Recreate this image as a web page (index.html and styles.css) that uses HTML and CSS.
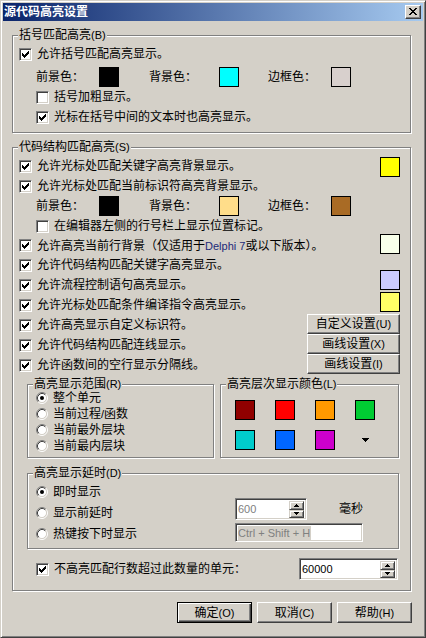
FILE: index.html
```html
<!DOCTYPE html>
<html lang="zh-CN">
<head>
<meta charset="utf-8">
<title>源代码高亮设置</title>
<link rel="stylesheet" href="styles.css">
</head>
<body>
<div class="window">
  <div class="titlebar">
    <span class="title">源代码高亮设置</span>
    <span class="close"><svg class="xglyph" width="8" height="7" viewBox="0 0 8 7"><path d="M0 0h2v1H0zM6 0h2v1H6zM1 1h2v1H1zM5 1h2v1H5zM2 2h4v1H2zM3 3h2v1H3zM2 4h4v1H2zM1 5h2v1H1zM5 5h2v1H5zM0 6h2v1H0zM6 6h2v1H6z" fill="#000"/></svg></span>
  </div>
  <div class="client">
    <div class="group g1">
      <span class="legend">括号匹配高亮<span class="m">(B)</span></span>
      <div class="row"><span class="cb"><svg class="ck" width="11" height="11" viewBox="0 0 11 11"><path d="M2 4h1v3H2zM3 5h1v3H3zM4 6h1v3H4zM5 5h1v3H5zM6 4h1v3H6zM7 3h1v3H7zM8 2h1v3H8z"/></svg></span><span class="txt">允许括号匹配高亮显示。</span></div>
      <div class="colors">
        <span class="lbl l1">前景色：</span><span class="sw c-black"></span>
        <span class="lbl l2">背景色：</span><span class="sw c-cyan"></span>
        <span class="lbl l3">边框色：</span><span class="sw c-pale"></span>
      </div>
      <div class="row ind"><span class="cb"></span><span class="txt">括号加粗显示。</span></div>
      <div class="row ind"><span class="cb"><svg class="ck" width="11" height="11" viewBox="0 0 11 11"><path d="M2 4h1v3H2zM3 5h1v3H3zM4 6h1v3H4zM5 5h1v3H5zM6 4h1v3H6zM7 3h1v3H7zM8 2h1v3H8z"/></svg></span><span class="txt">光标在括号中间的文本时也高亮显示。</span></div>
    </div>

    <div class="group g2">
      <span class="legend">代码结构匹配高亮<span class="m">(S)</span></span>
      <div class="g2top">
        <div class="rows">
          <div class="row"><span class="cb"><svg class="ck" width="11" height="11" viewBox="0 0 11 11"><path d="M2 4h1v3H2zM3 5h1v3H3zM4 6h1v3H4zM5 5h1v3H5zM6 4h1v3H6zM7 3h1v3H7zM8 2h1v3H8z"/></svg></span><span class="txt">允许光标处匹配关键字高亮背景显示。</span></div>
          <div class="row"><span class="cb"><svg class="ck" width="11" height="11" viewBox="0 0 11 11"><path d="M2 4h1v3H2zM3 5h1v3H3zM4 6h1v3H4zM5 5h1v3H5zM6 4h1v3H6zM7 3h1v3H7zM8 2h1v3H8z"/></svg></span><span class="txt">允许光标处匹配当前标识符高亮背景显示。</span></div>
          <div class="colors c2">
            <span class="lbl l1">前景色：</span><span class="sw c-black"></span>
            <span class="lbl l2">背景色：</span><span class="sw c-peach"></span>
            <span class="lbl l3">边框色：</span><span class="sw c-brown"></span>
          </div>
          <div class="row ind"><span class="cb"></span><span class="txt">在编辑器左侧的行号栏上显示位置标记。</span></div>
          <div class="row r19"><span class="cb"><svg class="ck" width="11" height="11" viewBox="0 0 11 11"><path d="M2 4h1v3H2zM3 5h1v3H3zM4 6h1v3H4zM5 5h1v3H5zM6 4h1v3H6zM7 3h1v3H7zM8 2h1v3H8z"/></svg></span><span class="txt">允许高亮当前行背景（仅适用于<span class="m delphi">Delphi 7</span>或以下版本）。</span></div>
          <div class="row"><span class="cb"><svg class="ck" width="11" height="11" viewBox="0 0 11 11"><path d="M2 4h1v3H2zM3 5h1v3H3zM4 6h1v3H4zM5 5h1v3H5zM6 4h1v3H6zM7 3h1v3H7zM8 2h1v3H8z"/></svg></span><span class="txt">允许代码结构匹配关键字高亮显示。</span></div>
          <div class="row"><span class="cb"><svg class="ck" width="11" height="11" viewBox="0 0 11 11"><path d="M2 4h1v3H2zM3 5h1v3H3zM4 6h1v3H4zM5 5h1v3H5zM6 4h1v3H6zM7 3h1v3H7zM8 2h1v3H8z"/></svg></span><span class="txt">允许流程控制语句高亮显示。</span></div>
          <div class="row"><span class="cb"><svg class="ck" width="11" height="11" viewBox="0 0 11 11"><path d="M2 4h1v3H2zM3 5h1v3H3zM4 6h1v3H4zM5 5h1v3H5zM6 4h1v3H6zM7 3h1v3H7zM8 2h1v3H8z"/></svg></span><span class="txt">允许光标处匹配条件编译指令高亮显示。</span></div>
          <div class="row"><span class="cb"><svg class="ck" width="11" height="11" viewBox="0 0 11 11"><path d="M2 4h1v3H2zM3 5h1v3H3zM4 6h1v3H4zM5 5h1v3H5zM6 4h1v3H6zM7 3h1v3H7zM8 2h1v3H8z"/></svg></span><span class="txt">允许高亮显示自定义标识符。</span></div>
          <div class="row"><span class="cb"><svg class="ck" width="11" height="11" viewBox="0 0 11 11"><path d="M2 4h1v3H2zM3 5h1v3H3zM4 6h1v3H4zM5 5h1v3H5zM6 4h1v3H6zM7 3h1v3H7zM8 2h1v3H8z"/></svg></span><span class="txt">允许代码结构匹配连线显示。</span></div>
          <div class="row"><span class="cb"><svg class="ck" width="11" height="11" viewBox="0 0 11 11"><path d="M2 4h1v3H2zM3 5h1v3H3zM4 6h1v3H4zM5 5h1v3H5zM6 4h1v3H6zM7 3h1v3H7zM8 2h1v3H8z"/></svg></span><span class="txt">允许函数间的空行显示分隔线。</span></div>
        </div>
        <div class="rcol">
          <span class="sw c-yellow s1"></span>
          <span class="sw c-ivory s2"></span>
          <span class="sw c-lav s3"></span>
          <span class="sw c-lemon s4"></span>
          <div class="sidebtns">
            <span class="btn sbtn">自定义设置<span class="m">(U)</span></span>
            <span class="btn sbtn">画线设置<span class="m">(X)</span></span>
            <span class="btn sbtn">画线设置<span class="m">(I)</span></span>
          </div>
        </div>
      </div>

      <div class="subrow">
        <div class="group range">
          <span class="legend">高亮显示范围<span class="m">(R)</span></span>
          <div class="rrow"><svg class="rb" width="12" height="12" viewBox="0 0 12 12"><circle cx="6" cy="6" r="4.5" fill="#fff"/><path d="M2.11 9.89A5.5 5.5 0 0 1 9.89 2.11" stroke="#808080" fill="none"/><path d="M9.89 2.11A5.5 5.5 0 0 1 2.11 9.89" stroke="#fff" fill="none"/><path d="M2.82 9.18A4.5 4.5 0 0 1 9.18 2.82" stroke="#404040" fill="none"/><path d="M9.18 2.82A4.5 4.5 0 0 1 2.82 9.18" stroke="#d4d0c8" fill="none"/><circle cx="6" cy="6" r="2" fill="#000"/></svg><span class="txt">整个单元</span></div>
          <div class="rrow"><svg class="rb" width="12" height="12" viewBox="0 0 12 12"><circle cx="6" cy="6" r="4.5" fill="#fff"/><path d="M2.11 9.89A5.5 5.5 0 0 1 9.89 2.11" stroke="#808080" fill="none"/><path d="M9.89 2.11A5.5 5.5 0 0 1 2.11 9.89" stroke="#fff" fill="none"/><path d="M2.82 9.18A4.5 4.5 0 0 1 9.18 2.82" stroke="#404040" fill="none"/><path d="M9.18 2.82A4.5 4.5 0 0 1 2.82 9.18" stroke="#d4d0c8" fill="none"/></svg><span class="txt">当前过程<span class="m">/</span>函数</span></div>
          <div class="rrow"><svg class="rb" width="12" height="12" viewBox="0 0 12 12"><circle cx="6" cy="6" r="4.5" fill="#fff"/><path d="M2.11 9.89A5.5 5.5 0 0 1 9.89 2.11" stroke="#808080" fill="none"/><path d="M9.89 2.11A5.5 5.5 0 0 1 2.11 9.89" stroke="#fff" fill="none"/><path d="M2.82 9.18A4.5 4.5 0 0 1 9.18 2.82" stroke="#404040" fill="none"/><path d="M9.18 2.82A4.5 4.5 0 0 1 2.82 9.18" stroke="#d4d0c8" fill="none"/></svg><span class="txt">当前最外层块</span></div>
          <div class="rrow"><svg class="rb" width="12" height="12" viewBox="0 0 12 12"><circle cx="6" cy="6" r="4.5" fill="#fff"/><path d="M2.11 9.89A5.5 5.5 0 0 1 9.89 2.11" stroke="#808080" fill="none"/><path d="M9.89 2.11A5.5 5.5 0 0 1 2.11 9.89" stroke="#fff" fill="none"/><path d="M2.82 9.18A4.5 4.5 0 0 1 9.18 2.82" stroke="#404040" fill="none"/><path d="M9.18 2.82A4.5 4.5 0 0 1 2.82 9.18" stroke="#d4d0c8" fill="none"/></svg><span class="txt">当前最内层块</span></div>
        </div>
        <div class="group levels">
          <span class="legend">高亮层次显示颜色<span class="m">(L)</span></span>
          <div class="lgrid">
            <span class="sw c-maroon"></span>
            <span class="sw c-red"></span>
            <span class="sw c-orange"></span>
            <span class="sw c-green"></span>
            <span class="sw c-teal"></span>
            <span class="sw c-blue"></span>
            <span class="sw c-magenta"></span>
            <span class="more"><svg width="7" height="4" viewBox="0 0 7 4"><path d="M0 0h7v1H6v1H5v1H4v1H3V3H2V2H1V1H0z" fill="#000"/></svg></span>
          </div>
        </div>
      </div>

      <div class="group delay">
        <span class="legend">高亮显示延时<span class="m">(D)</span></span>
        <div class="dleft">
          <div class="drow"><svg class="rb" width="12" height="12" viewBox="0 0 12 12"><circle cx="6" cy="6" r="4.5" fill="#fff"/><path d="M2.11 9.89A5.5 5.5 0 0 1 9.89 2.11" stroke="#808080" fill="none"/><path d="M9.89 2.11A5.5 5.5 0 0 1 2.11 9.89" stroke="#fff" fill="none"/><path d="M2.82 9.18A4.5 4.5 0 0 1 9.18 2.82" stroke="#404040" fill="none"/><path d="M9.18 2.82A4.5 4.5 0 0 1 2.82 9.18" stroke="#d4d0c8" fill="none"/><circle cx="6" cy="6" r="2" fill="#000"/></svg><span class="txt">即时显示</span></div>
          <div class="drow"><svg class="rb" width="12" height="12" viewBox="0 0 12 12"><circle cx="6" cy="6" r="4.5" fill="#fff"/><path d="M2.11 9.89A5.5 5.5 0 0 1 9.89 2.11" stroke="#808080" fill="none"/><path d="M9.89 2.11A5.5 5.5 0 0 1 2.11 9.89" stroke="#fff" fill="none"/><path d="M2.82 9.18A4.5 4.5 0 0 1 9.18 2.82" stroke="#404040" fill="none"/><path d="M9.18 2.82A4.5 4.5 0 0 1 2.82 9.18" stroke="#d4d0c8" fill="none"/></svg><span class="txt">显示前延时</span></div>
          <div class="drow"><svg class="rb" width="12" height="12" viewBox="0 0 12 12"><circle cx="6" cy="6" r="4.5" fill="#fff"/><path d="M2.11 9.89A5.5 5.5 0 0 1 9.89 2.11" stroke="#808080" fill="none"/><path d="M9.89 2.11A5.5 5.5 0 0 1 2.11 9.89" stroke="#fff" fill="none"/><path d="M2.82 9.18A4.5 4.5 0 0 1 9.18 2.82" stroke="#404040" fill="none"/><path d="M9.18 2.82A4.5 4.5 0 0 1 2.82 9.18" stroke="#d4d0c8" fill="none"/></svg><span class="txt">热键按下时显示</span></div>
        </div>
        <div class="dright">
          <div class="spinrow">
            <div class="spin sp600">
              <span class="val dis">600</span>
              <span class="arrows">
                <span class="abtn"><svg width="5" height="3" viewBox="0 0 5 3"><path d="M2 0h1v1h1v1h1v1H0V2h1V1h1z" fill="#000"/></svg></span>
                <span class="abtn"><svg width="5" height="3" viewBox="0 0 5 3"><path d="M0 0h5v1H4v1H3v1H2V2H1V1H0z" fill="#000"/></svg></span>
              </span>
            </div>
            <span class="ms">毫秒</span>
          </div>
          <div class="hotkey"><span class="hk">Ctrl + Shift + H</span></div>
        </div>
      </div>

      <div class="lastrow">
        <span class="cb"><svg class="ck" width="11" height="11" viewBox="0 0 11 11"><path d="M2 4h1v3H2zM3 5h1v3H3zM4 6h1v3H4zM5 5h1v3H5zM6 4h1v3H6zM7 3h1v3H7zM8 2h1v3H8z"/></svg></span><span class="txt">不高亮匹配行数超过此数量的单元：</span>
        <div class="spin sp60000">
          <span class="val">60000</span>
          <span class="arrows">
            <span class="abtn"><svg width="5" height="3" viewBox="0 0 5 3"><path d="M2 0h1v1h1v1h1v1H0V2h1V1h1z" fill="#000"/></svg></span>
            <span class="abtn"><svg width="5" height="3" viewBox="0 0 5 3"><path d="M0 0h5v1H4v1H3v1H2V2H1V1H0z" fill="#000"/></svg></span>
          </span>
        </div>
      </div>
    </div>

    <div class="buttons">
      <span class="btn dbtn def">确定<span class="m">(O)</span></span>
      <span class="btn dbtn">取消<span class="m">(C)</span></span>
      <span class="btn dbtn">帮助<span class="m">(H)</span></span>
    </div>
  </div>
</div>
</body>
</html>
```

FILE: styles.css
```css
* { box-sizing: border-box; }
html, body { margin: 0; padding: 0; }
body {
  width: 426px; height: 638px; overflow: hidden;
  background: #d4d0c8;
  font-family: "Liberation Sans", "Noto Sans CJK SC", sans-serif;
  font-size: 12px; line-height: 14px; color: #000;
}
.window {
  width: 426px; height: 638px;
  border: 1px solid; border-color: #d4d0c8 #404040 #404040 #d4d0c8;
  box-shadow: inset 1px 1px #fff, inset -1px -1px #808080;
  padding: 2px;
  display: flex; flex-direction: column;
  background: #d4d0c8;
}
.titlebar {
  height: 18px; flex: none;
  background: linear-gradient(to right, #0a246a, #a6caf0);
  display: flex; align-items: center; justify-content: space-between;
  padding: 0 2px 0 1px;
}
.title { color: #fff; font-weight: bold; font-size: 12px; }
.close {
  width: 16px; height: 14px; background: #d4d0c8;
  border: 1px solid; border-color: #fff #404040 #404040 #fff;
  box-shadow: inset -1px -1px #808080;
  display: flex; align-items: center; justify-content: center;
  padding-bottom: 1px;
}
.xglyph { display: block; }
.client { padding: 14px 11px 0 9px; }

.group {
  position: relative;
  border: 1px solid #808080;
  box-shadow: 1px 1px 0 #fff, inset 1px 1px 0 #fff;
}
.legend {
  position: absolute; top: -8px; left: 5px;
  background: #d4d0c8; padding: 0 1px;
  line-height: 14px; white-space: nowrap;
}
.m { font-size: 11px; }
.delphi { color: #1c2a78; }

.g1 { width: 399px; height: 98px; padding: 8px 0 0 6px; }
.g2 { width: 399px; height: 444px; margin-top: 14px; padding: 8px 10px 0 6px; }

.row { display: flex; align-items: center; height: 20px; white-space: nowrap; }
.row.r19 { height: 19px; }
.row.ind { padding-left: 17px; }
.txt { margin-left: 5px; white-space: nowrap; }

.cb {
  width: 13px; height: 13px; flex: none;
  border: 1px solid; border-color: #808080 #fff #fff #808080;
  box-shadow: inset 1px 1px #404040, inset -1px -1px #d4d0c8;
  background: #fff;
}
.ck { display: block; fill: #000; }
.rb { display: block; flex: none; }

.colors { display: flex; align-items: center; height: 20px; margin-top: 3px; padding-left: 17px; white-space: nowrap; }
.colors.c2 { margin-top: 0; }
.lbl { flex: none; }
.l1 { width: 63px; }
.l2 { width: 70px; margin-left: 30px; }
.l3 { width: 63px; margin-left: 29px; }

.sw { display: block; width: 20px; height: 20px; border: 1px solid #000; flex: none; }
.c-black { background: #000; }
.c-cyan { background: #00ffff; }
.c-pale { background: #d8d0cd; }
.c-peach { background: #ffdd8a; }
.c-brown { background: #a96b25; }
.c-yellow { background: #ffff00; }
.c-ivory { background: #f8ffea; }
.c-lav { background: #ccccff; }
.c-lemon { background: #ffff66; }
.c-maroon { background: #900000; }
.c-red { background: #ff0000; }
.c-orange { background: #ff9900; }
.c-green { background: #00cc33; }
.c-teal { background: #00cccc; }
.c-blue { background: #0066ff; }
.c-magenta { background: #cc00cc; }

.g2top { display: flex; }
.rows { flex: 1; min-width: 0; }
.rcol { width: 93px; flex: none; display: flex; flex-direction: column; align-items: flex-end; }
.s1 { margin-top: 1px; }
.s2 { margin-top: 57px; }
.s3 { margin-top: 16px; }
.s4 { margin-top: 2px; }
.sidebtns { margin-top: 2px; width: 93px; display: flex; flex-direction: column; }

.btn {
  display: flex; align-items: center; justify-content: center;
  background: #d4d0c8; white-space: nowrap;
  border: 1px solid; border-color: #fff #404040 #404040 #fff;
  box-shadow: inset -1px -1px #808080;
}
.sbtn { height: 20px; width: 93px; }

.subrow { display: flex; margin-top: 9px; padding-left: 8px; }
.range { width: 187px; height: 74px; padding: 5px 0 0 8px; }
.levels { width: 179px; height: 74px; margin-left: 6px; padding: 15px 0 0 14px; }
.rrow { display: flex; align-items: center; height: 16px; }
.lgrid { display: grid; grid-template-columns: repeat(4, 20px); grid-auto-rows: 20px; column-gap: 20px; row-gap: 10px; }
.more { display: flex; align-items: center; justify-content: center; }
.more svg { display: block; }

.delay { width: 372px; height: 76px; margin: 15px 0 0 8px; padding: 7px 0 0 8px; display: flex; }
.dleft { width: 199px; flex: none; }
.drow { display: flex; align-items: center; height: 21px; }
.dright { padding-top: 17px; }
.spinrow { display: flex; align-items: center; height: 22px; }
.ms { margin-left: 32px; }

.spin {
  height: 22px; display: flex; align-items: center;
  background: #fff;
  border: 1px solid; border-color: #808080 #fff #fff #808080;
  box-shadow: inset 1px 1px #404040, inset -1px -1px #d4d0c8;
  padding: 2px 2px 2px 2px;
}
.sp600 { width: 72px; }
.sp60000 { width: 99px; margin-left: auto; margin-right: 2px; }
.val { flex: 1; font-family: "Liberation Sans", sans-serif; font-size: 11px; line-height: 16px; }
.val.dis { color: #808080; }
.arrows { width: 15px; height: 17px; display: flex; flex-direction: column; flex: none; margin-top: 1px; }
.abtn {
  flex: 1; display: flex; align-items: center; justify-content: center;
  background: #d4d0c8;
  border: 1px solid; border-color: #d4d0c8 #404040 #404040 #d4d0c8;
  box-shadow: inset 1px 1px #fff, inset -1px -1px #808080;
}
.abtn svg { display: block; }

.hotkey {
  width: 128px; height: 19px; margin-top: 3px;
  background: #fff;
  border: 1px solid; border-color: #808080 #fff #fff #808080;
  box-shadow: inset 1px 1px #404040, inset -1px -1px #d4d0c8;
  padding: 2px 2px 1px 2px; display: flex; align-items: stretch;
}
.hk {
  flex: none; background: #d4d0c8; color: #808080;
  font-family: "Liberation Sans", sans-serif; font-size: 11px; line-height: 15px;
  padding-right: 1px; white-space: pre;
}

.lastrow { display: flex; align-items: center; height: 22px; margin-top: 9px; padding-left: 17px; white-space: nowrap; }

.buttons { display: flex; justify-content: flex-end; gap: 5px; margin-top: 11px; }
.dbtn { width: 75px; height: 21px; }
.dbtn.def {
  border: 1px solid #000;
  box-shadow: inset 1px 1px #fff, inset -1px -1px #404040, inset -2px -2px #808080;
}
```
